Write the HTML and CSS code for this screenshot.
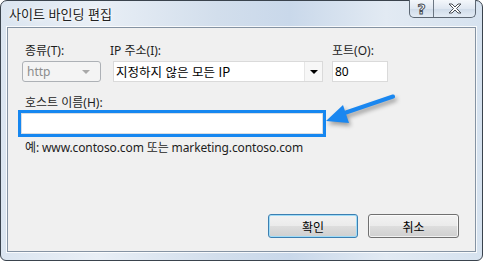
FILE: index.html
```html
<!DOCTYPE html>
<html lang="ko">
<head>
    <meta charset="UTF-8">
    <title>사이트 바인딩 편집</title>
    <link rel="stylesheet" href="styles.css">
</head>
<body>
    <div class="window">
        <div class="titlebar">
            <span class="title">사이트 바인딩 편집</span>
            <div class="caption-buttons">
                <div class="cap cap-help">?</div>
                <div class="cap cap-close">
                    <svg width="14" height="11" viewBox="0 0 14 11">
                        <path d="M1 1h3l3 3 3-3h3l-4.5 4.5L13 10h-3L7 7l-3 3H1l4.5-4.5z" fill="#fff" stroke="#4a4f56" stroke-width="1"/>
                    </svg>
                </div>
            </div>
        </div>

        <div class="client">
            <div class="field-row">
                <div class="field field-type">
                    <label>종류(T):</label>
                    <div class="combo disabled">
                        <span>http</span>
                        <span class="combo-arrow"></span>
                    </div>
                </div>
                <div class="field field-ip">
                    <label>IP 주소(I):</label>
                    <div class="combo">
                        <span class="combo-text">지정하지 않은 모든 IP</span>
                        <span class="combo-button"><span class="combo-arrow"></span></span>
                    </div>
                </div>
                <div class="field field-port">
                    <label>포트(O):</label>
                    <div class="textbox">80</div>
                </div>
            </div>

            <div class="host">
                <label>호스트 이름(H):</label>
                <div class="textbox focused"></div>
                <p class="hint">예: www.contoso.com 또는 marketing.contoso.com</p>
            </div>

            <div class="buttons">
                <button class="btn default">확인</button>
                <button class="btn">취소</button>
            </div>
        </div>

        <!-- callout arrow pointing at the host name box -->
        <svg class="callout" width="483" height="261" viewBox="0 0 483 261">
            <path d="M393 96.5 L346 112.5" stroke="#1a87f0" stroke-width="4" stroke-linecap="round"/>
            <polygon points="326,121 343,105 349,123" fill="#1a87f0"/>
        </svg>
    </div>
</body>
</html>
```

FILE: styles.css
```css
* {
    box-sizing: border-box;
    margin: 0;
    padding: 0;
}

body {
    background: #fff;
    font-family: "Segoe UI", "Noto Sans", "Noto Sans CJK KR", sans-serif;
    font-size: 12px;
    color: #1e1e1e;
}

.window {
    position: relative;
    width: 483px;
    height: 261px;
    display: flex;
    flex-direction: column;
    padding: 0 6px 8px 6px;
    border: 1px solid #3a434d;
    border-radius: 7px 7px 6px 6px;
    background: linear-gradient(90deg, #dbe5f0 0%, #e9eff6 20%, #d2deec 45%, #c9d8ea 60%, #e2eaf3 80%, #d6e2ef 100%);
}

.titlebar {
    height: 26px;
    display: flex;
    justify-content: space-between;
    align-items: flex-start;
}

.title {
    padding: 5px 0 0 2px;
    font-family: "Noto Sans CJK KR", sans-serif;
    font-size: 13px;
    line-height: 16px;
    color: #222;
    text-shadow: 0 0 6px #fff, 0 0 3px #fff;
}

.caption-buttons {
    display: flex;
    height: 18px;
    margin-top: -1px;
    border: 1px solid #5c6773;
    border-top: none;
    border-radius: 0 0 5px 5px;
    overflow: hidden;
    background: linear-gradient(#f4f7fb, #dfe7f1 50%, #cfdbe9 51%, #e4ecf5);
}

.cap {
    display: flex;
    align-items: center;
    justify-content: center;
    height: 100%;
}

.cap-help {
    width: 24px;
    border-right: 1px solid #6c7783;
    font-family: "DejaVu Sans", sans-serif;
    font-size: 14px;
    font-weight: bold;
    color: #fff;
    -webkit-text-stroke: 1px #4a4f56;
}

.cap-close {
    width: 41px;
}

.client {
    position: relative;
    flex: 1;
    display: flex;
    flex-direction: column;
    background: #f0f0f0;
    border: 1px solid #8593a3;
    box-shadow: 0 0 0 1px rgba(255, 255, 255, 0.8);
}

label {
    display: block;
    height: 15px;
    line-height: 15px;
}

.field-row {
    display: flex;
    padding: 15px 0 0 14px;
}

.field label {
    margin-bottom: 3px;
}

.field-type {
    width: 79px;
    margin-right: 12px;
}

.field-type label {
    padding-left: 3px;
}

.field-ip {
    width: 210px;
    margin-right: 9px;
}

.field-ip label {
    margin-left: -3px;
}

.field-port {
    width: 56px;
}

.combo {
    display: flex;
    align-items: center;
    height: 21px;
    background: #fff;
    border: 1px solid #dadada;
}

.combo.disabled {
    justify-content: space-between;
    padding: 0 10px 0 4px;
    background: #f4f4f4;
    border: 1px solid #adb1b6;
    border-radius: 3px;
    color: #8c8c8c;
}

.combo.disabled .combo-arrow {
    border-top-color: #a8a8a8;
}

.combo-text {
    flex: 1;
    padding-left: 2px;
    font-family: "Noto Sans CJK KR", sans-serif;
    font-size: 12.5px;
    color: #000;
}

.combo-button {
    display: flex;
    align-items: center;
    justify-content: center;
    width: 18px;
    height: 100%;
    border-left: 1px solid #e6e6e6;
    background: #f7f7f7;
}

.combo-arrow {
    width: 0;
    height: 0;
    border-left: 4px solid transparent;
    border-right: 4px solid transparent;
    border-top: 4px solid #000;
}

.textbox {
    height: 21px;
    line-height: 19px;
    padding-left: 2px;
    background: #fff;
    border: 1px solid #dadada;
    color: #000;
}

.host {
    padding-top: 13px;
}

.host label {
    padding-left: 17px;
}

.textbox.focused {
    width: 308px;
    height: 27px;
    margin-left: 10px;
    border: 3px solid #1687f0;
    box-shadow: inset 0 0 0 1px #d8dde3;
}

.hint {
    padding: 3px 0 0 17px;
    line-height: 15px;
    letter-spacing: -0.12px;
}

.buttons {
    margin-top: auto;
    display: flex;
    justify-content: flex-end;
    gap: 10px;
    padding: 0 16px 13px 0;
}

.btn {
    height: 24px;
    font-family: "Noto Sans CJK KR", sans-serif;
    font-size: 12px;
    color: #000;
    border: 1px solid #707070;
    border-radius: 3px;
    background: linear-gradient(#f2f2f2 0%, #ebebeb 48%, #dddddd 52%, #cfcfcf 100%);
    box-shadow: inset 0 0 0 1px rgba(255, 255, 255, 0.7);
}

.btn.default {
    width: 90px;
    border-color: #3c7fb1;
    box-shadow: inset 0 0 0 1px #9fdcf8;
}

.btn:not(.default) {
    width: 91px;
}

.callout {
    position: absolute;
    top: -1px;
    left: -1px;
    pointer-events: none;
    filter: drop-shadow(2px 3px 2px rgba(0, 0, 0, 0.35));
}
```
